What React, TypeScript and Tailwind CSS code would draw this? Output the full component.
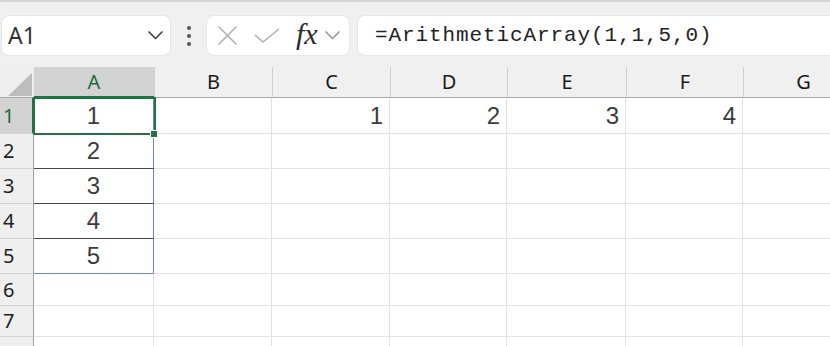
import React from "react";

const colW = ["w-[120px]", "w-[118px]", "w-[118px]", "w-[117px]", "w-[119px]", "w-[117px]", "w-[120px]"];
const colNames = ["A", "B", "C", "D", "E", "F", "G"];
const rowH = ["h-[36px]", "h-[35px]", "h-[35px]", "h-[35px]", "h-[35px]", "h-[32px]", "h-[31px]", "h-[20px]"];

const data: Record<string, string> = {
  "0-0": "1",
  "1-0": "2",
  "2-0": "3",
  "3-0": "4",
  "4-0": "5",
  "0-2": "1",
  "0-3": "2",
  "0-4": "3",
  "0-5": "4",
};

function Chevron({ className }: { className?: string }) {
  return (
    <svg className={className} width="17" height="11" viewBox="0 0 17 11" fill="none">
      <polyline points="2,2 8.5,8.5 15,2" stroke="currentColor" strokeWidth="1.7" strokeLinecap="round" strokeLinejoin="round" />
    </svg>
  );
}

export default function App() {
  return (
    <div className="w-[830px] h-[346px] overflow-hidden bg-[#f0f0f0] flex flex-col font-['Noto_Sans',sans-serif]">
      <div className="h-[2px] shrink-0 bg-[#d3d6d6]" />
      {/* toolbar */}
      <div className="h-[65px] shrink-0 flex items-start pt-[14px] pl-[2px]">
        <div className="w-[168px] shrink-0 h-[39px] bg-white rounded-[7px] flex items-center pl-[6px] pr-[6px] shadow-[0_0_0_1px_#e6e6e6]">
          <span className="text-[23px] text-[#333] leading-none">A1</span>
          <Chevron className="ml-auto text-[#444]" />
        </div>
        <div className="w-[37px] shrink-0 h-[39px] flex flex-col items-center justify-center gap-[4px]">
          <div className="w-[4px] h-[4px] rounded-full bg-[#555]" />
          <div className="w-[4px] h-[4px] rounded-full bg-[#555]" />
          <div className="w-[4px] h-[4px] rounded-full bg-[#555]" />
        </div>
        <div className="w-[142px] shrink-0 h-[39px] bg-white rounded-[7px] flex items-center pl-[10px] shadow-[0_0_0_1px_#e6e6e6]">
          <svg width="21" height="21" viewBox="0 0 21 21" fill="none">
            <line x1="1.5" y1="1.5" x2="19.5" y2="19.5" stroke="#b0b0b0" strokeWidth="1.6" />
            <line x1="19.5" y1="1.5" x2="1.5" y2="19.5" stroke="#b0b0b0" strokeWidth="1.6" />
          </svg>
          <svg className="ml-[16px]" width="26" height="16" viewBox="0 0 26 16" fill="none">
            <polyline points="1,7 9,14 25,1" stroke="#b0b0b0" strokeWidth="1.6" fill="none" />
          </svg>
          <span className="ml-[16px] font-['Liberation_Serif',serif] italic text-[30px] leading-none text-[#2b2b2b] -mt-[4px]">fx</span>
          <Chevron className="ml-[6px] text-[#9a9a9a]" />
        </div>
        <div className="ml-[9px] w-[500px] shrink-0 h-[39px] bg-white rounded-[7px] flex items-center pl-[17px] shadow-[0_0_0_1px_#e6e6e6]">
          <span className="font-['Liberation_Mono',monospace] text-[21px] tracking-[0.9px] text-[#222] leading-none">=ArithmeticArray(1,1,5,0)</span>
        </div>
      </div>
      {/* grid */}
      <div className="relative flex-1 flex flex-col overflow-hidden">
        {/* header row */}
        <div className="flex h-[31px] shrink-0">
          <div className="w-[34px] shrink-0 border-b border-[#a8a8a8] bg-[#efefef] relative">
            <svg className="absolute left-[8px] top-[6px]" width="24" height="23" viewBox="0 0 24 23">
              <polygon points="24,0 24,23 0,23" fill="#bdbdbd" />
            </svg>
          </div>
          {colNames.map((c, i) =>
            i === 0 ? (
              <div key={c} className={`${colW[i]} shrink-0 bg-[#d3d3d3] border-b-2 border-[#217346] flex items-center justify-center text-[20px] text-[#1e6b41]`}>
                {c}
              </div>
            ) : (
              <div key={c} className={`${colW[i]} shrink-0 bg-[#f0f0f0] border-l border-[#cfcfcf] border-b border-b-[#a8a8a8] flex items-center justify-center text-[20px] text-[#1a1a1a]`}>
                {c}
              </div>
            )
          )}
        </div>
        {rowH.map((h, r) => (
          <div key={r} className={`flex ${h} shrink-0`}>
            <div
              className={
                r === 0
                  ? "w-[34px] shrink-0 bg-[#d3d3d3] border-r-2 border-r-[#217346] border-b border-b-[#d4d4d4] flex items-center pl-[3px] text-[20px] text-[#1e6b41]"
                  : "w-[34px] shrink-0 bg-[#efefef] border-r border-r-[#9f9f9f] border-b border-b-[#d4d4d4] flex items-center pl-[3px] text-[20px] text-[#1f1f1f]"
              }
            >
              {r < 7 ? r + 1 : ""}
            </div>
            {colNames.map((c, i) => {
              const v = data[`${r}-${i}`];
              let cls = `${colW[i]} shrink-0 bg-white flex items-center font-['Liberation_Sans',sans-serif] text-[24px] text-[#3c3c3c] `;
              if (i === 0 && r < 5) {
                cls += "justify-center border-r border-r-[#6f87bf] ";
                cls += r < 4 ? "border-b border-b-[#474747]" : "border-b border-b-[#6f87bf]";
              } else {
                cls += "justify-end pr-[6px] border-r border-b border-[#e2e2e2]";
              }
              return (
                <div key={c} className={cls}>
                  {v}
                </div>
              );
            })}
          </div>
        ))}
        {/* selection overlay */}
        <div className="absolute left-[33px] top-[30px] w-[123px] h-[38px] border-2 border-[#217346] pointer-events-none" />
        <div className="absolute left-[150px] top-[63px] w-[8px] h-[8px] bg-[#217346] border border-white pointer-events-none" />
      </div>
    </div>
  );
}
